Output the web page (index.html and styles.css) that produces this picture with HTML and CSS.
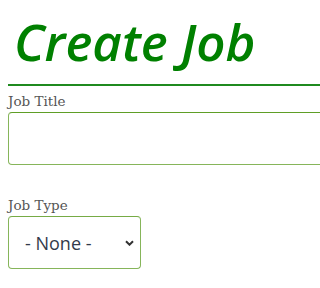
FILE: index.html
```html
<!DOCTYPE html>
<html>
<head>
<meta charset="utf-8">
<link rel="stylesheet" href="styles.css">
</head>
<body>
<div class="page">
  <h1 class="title">Create Job</h1>
  <form class="form">
    <div class="field">
      <label class="label" for="jt">Job Title</label>
      <input class="input" id="jt" type="text">
    </div>
    <div class="field">
      <label class="label" for="jtype">Job Type</label>
      <select class="select" id="jtype">
        <option>- None -</option>
      </select>
    </div>
  </form>
</div>
</body>
</html>
```
FILE: styles.css
```css
html, body {
  margin: 0;
  padding: 0;
  background: #fff;
  overflow: hidden;
}
.page {
  padding: 0 0 0 8px;
  overflow: hidden;
}
.title {
  margin: 0 -60px 0 0;
  padding: 8px 0 9px 6px;
  font-family: "Open Sans", sans-serif;
  font-style: italic;
  font-weight: 600;
  font-size: 51px;
  line-height: 67px;
  color: #008000;
  border-bottom: 2px solid #1f8a1f;
  white-space: nowrap;
}
.form {
  display: flex;
  flex-direction: column;
  gap: 25px;
}
.field {
  display: flex;
  flex-direction: column;
  align-items: flex-start;
}
.label {
  font-family: "DejaVu Serif", serif;
  font-size: 13.5px;
  line-height: 18px;
  color: #555;
  margin-top: 6px;
  margin-bottom: 2px;
}
.input {
  box-sizing: border-box;
  width: calc(100% + 60px);
  height: 53px;
  margin: 0;
  border: 1px solid #86b55a;
  border-top-color: #5f9e26;
  border-radius: 4px;
  background: #fff;
}
.select {
  box-sizing: border-box;
  width: 133px;
  height: 53px;
  margin: 0;
  padding: 0 0 0 16px;
  appearance: none;
  -webkit-appearance: none;
  border: 1px solid #86b55a;
  border-top-color: #76ab45;
  border-radius: 4px;
  background: #fff url("data:image/svg+xml;utf8,<svg xmlns='http://www.w3.org/2000/svg' width='9' height='6' viewBox='0 0 9 6'><path d='M1 1.2l3.5 3.5 3.5-3.5' fill='none' stroke='%23333' stroke-width='2'/></svg>") no-repeat right 6px center;
  font-family: "Open Sans", sans-serif;
  font-size: 18px;
  color: #333a4a;
}
```
